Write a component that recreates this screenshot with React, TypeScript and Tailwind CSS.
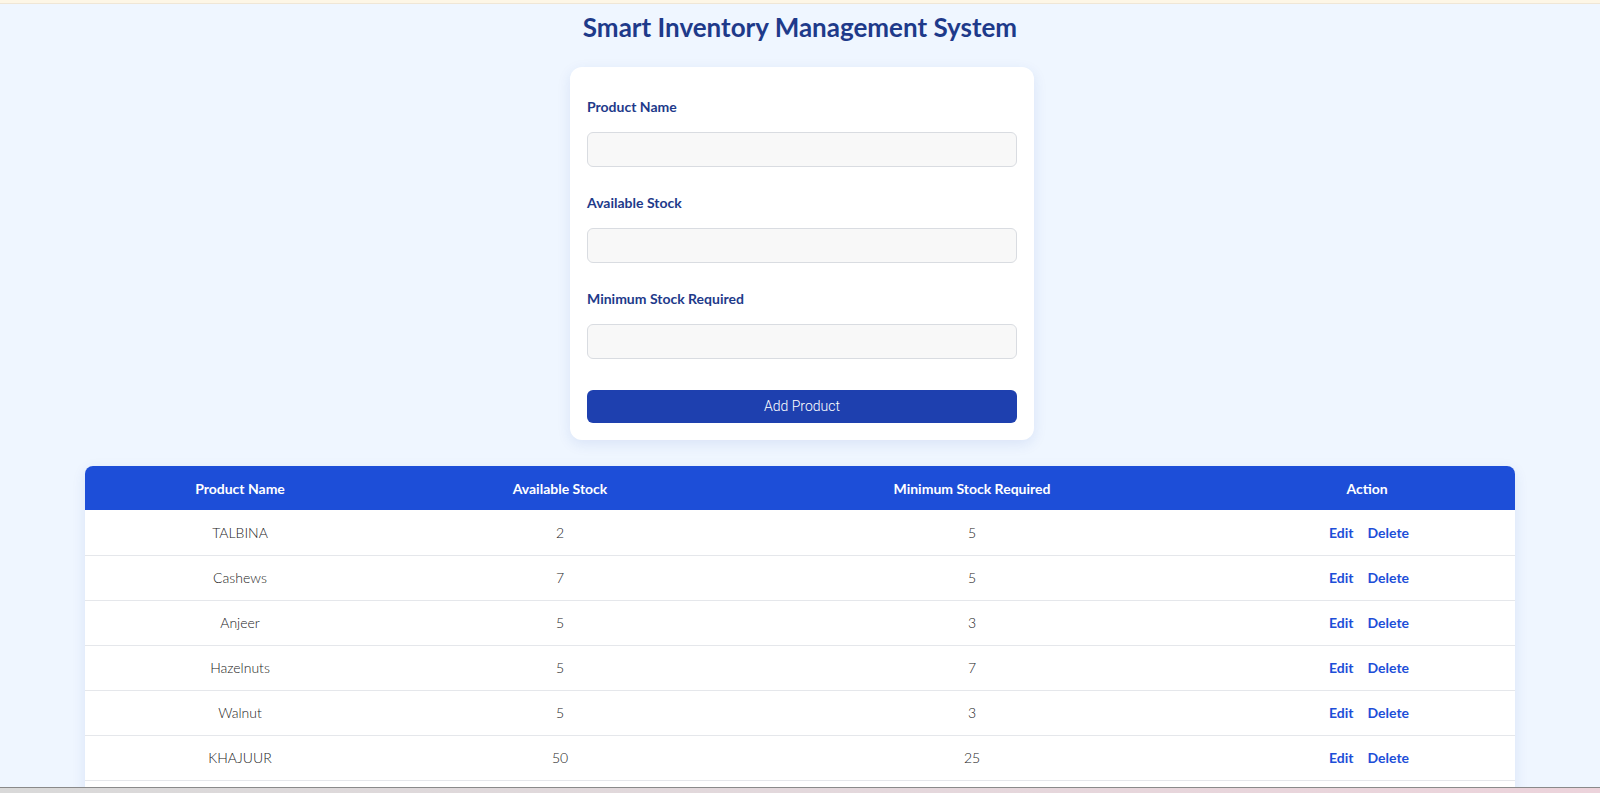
const products = [
  { name: "TALBINA", stock: 2, min: 5 },
  { name: "Cashews", stock: 7, min: 5 },
  { name: "Anjeer", stock: 5, min: 3 },
  { name: "Hazelnuts", stock: 5, min: 7 },
  { name: "Walnut", stock: 5, min: 3 },
  { name: "KHAJUUR", stock: 50, min: 25 },
];

const Field = ({ label, first }: { label: string; first?: boolean }) => {
  return (
    <div className={first ? "flex flex-col" : "flex flex-col mt-[26px]"}>
      <label className="text-[14px] leading-5 font-bold text-[#1e3a8a]">
        {label}
      </label>
      <input
        type="text"
        className="mt-[15px] h-[35px] w-full rounded-md border border-[#d9dce1] bg-[#f8f8f8] px-3 outline-none"
      />
    </div>
  );
};

const App = () => {
  return (
    <div className="min-h-screen bg-[#eff6ff] font-['Lato',sans-serif]">
      <div className="h-[4px] bg-[#fdf6e6] border-b border-[#efe6d6]" />
      <h1 className="mt-[7px] text-center text-[26px] leading-8 font-bold text-[#1e3a8a]">
        Smart Inventory Management System
      </h1>

      <div className="mx-auto mt-[24px] w-[464px] translate-x-[2px] rounded-xl bg-white px-[17px] pt-[30px] pb-[17px] shadow-[0_4px_14px_rgba(30,64,175,0.10)]">
        <Field label="Product Name" first />
        <Field label="Available Stock" />
        <Field label="Minimum Stock Required" />
        <button className="mt-[31px] h-[33px] w-full rounded-md bg-[#1e40af] font-['Roboto',sans-serif] text-[14px] font-light text-white">
          Add Product
        </button>
      </div>

      <div className="mx-[85px] mt-[26px] overflow-hidden rounded-t-lg bg-white shadow-[0_4px_14px_rgba(30,64,175,0.10)]">
        <table className="w-full table-fixed border-collapse">
          <thead>
            <tr className="h-[44px] bg-[#1d4ed8] text-[14px] font-bold text-white">
              <th className="w-[310px]">Product Name</th>
              <th className="w-[330px]">Available Stock</th>
              <th className="w-[494px]">Minimum Stock Required</th>
              <th>Action</th>
            </tr>
          </thead>
          <tbody>
            {products.map((p) => (
              <tr
                key={p.name}
                className="h-[45px] border-b border-[#e5e7eb] text-center text-[14px] font-light text-[#222]"
              >
                <td>{p.name}</td>
                <td>{p.stock}</td>
                <td>{p.min}</td>
                <td>
                  <div className="flex justify-center gap-[14px] pl-[4px] font-bold text-[#1d4ed8]">
                    <button>Edit</button>
                    <button>Delete</button>
                  </div>
                </td>
              </tr>
            ))}
            <tr className="h-[45px]">
              <td colSpan={4} />
            </tr>
          </tbody>
        </table>
      </div>

      <div className="fixed bottom-0 left-0 right-0 h-[6px] border-t border-[#8a8a8a] bg-gradient-to-r from-[#d9d9d9] via-[#e3d8dc] to-[#ecd3db]" />
    </div>
  );
};

export default App;
